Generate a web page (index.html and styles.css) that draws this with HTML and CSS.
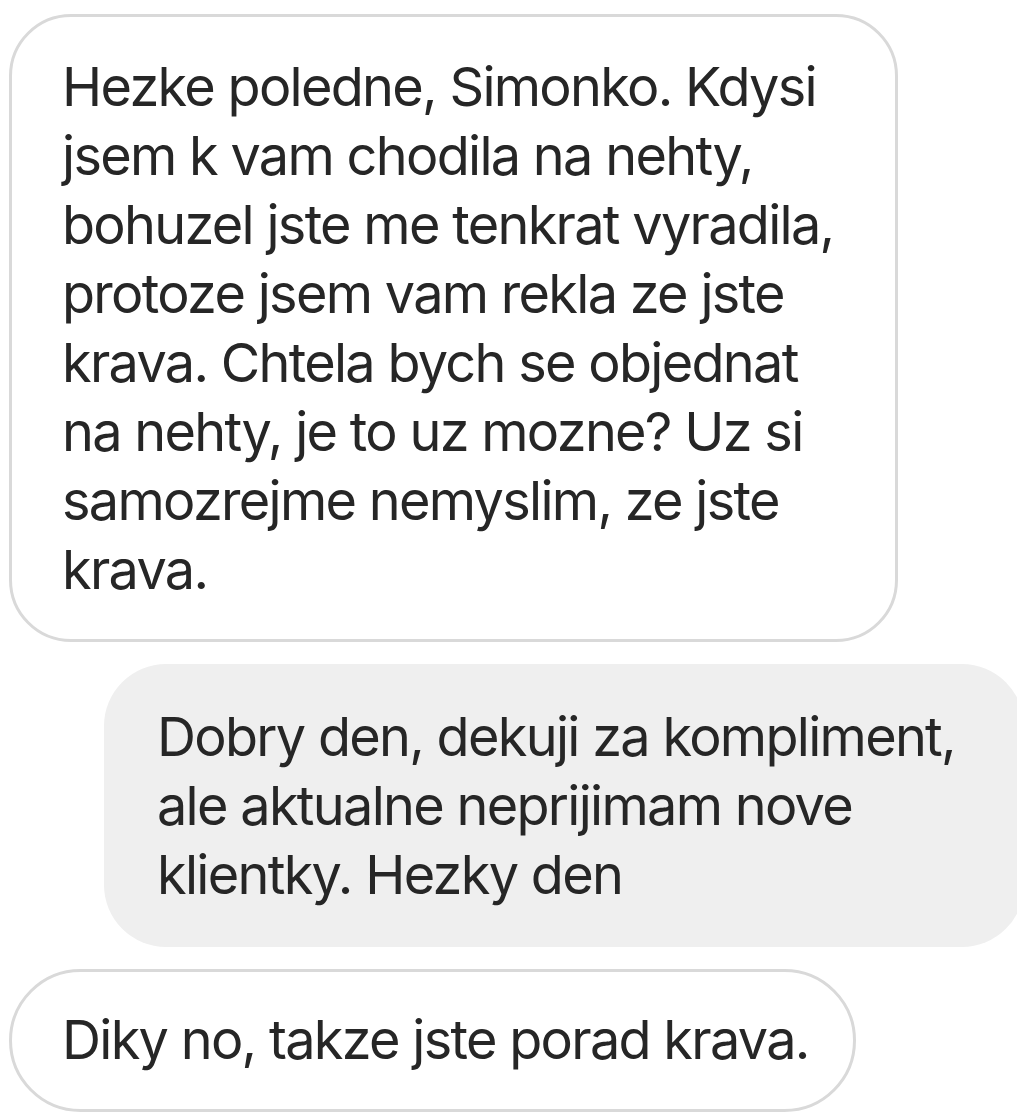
FILE: index.html
```html
<!DOCTYPE html>
<html lang="cs">
<head>
  <meta charset="UTF-8">
  <meta name="viewport" content="width=device-width, initial-scale=1.0">
  <title>Zpravy</title>
  <link rel="stylesheet" href="styles.css">
</head>
<body>
  <div class="chat">
    <div class="msg msg-in">
      Hezke poledne, Simonko. Kdysi<br>
      jsem k vam chodila na nehty,<br>
      bohuzel jste me tenkrat vyradila,<br>
      protoze jsem vam rekla ze jste<br>
      krava. Chtela bych se objednat<br>
      na nehty, je to uz mozne? Uz si<br>
      samozrejme nemyslim, ze jste<br>
      krava.
    </div>
    <div class="msg msg-out">
      Dobry den, dekuji za kompliment,<br>
      ale aktualne neprijimam nove<br>
      klientky. Hezky den
    </div>
    <div class="msg msg-in msg-pill">
      Diky no, takze jste porad krava.
    </div>
  </div>
</body>
</html>
```

FILE: styles.css
```css
html,
body {
  margin: 0;
  background: #fff;
  overflow: hidden;
}
.chat {
  display: flex;
  flex-direction: column;
  gap: 22px;
  padding: 14px 0 0 9px;
  font-family: Inter, "Noto Sans", sans-serif;
  font-size: 54px;
  line-height: 69px;
  letter-spacing: -1.7px;
  color: #262626;
  white-space: nowrap;
}
.msg {
  box-sizing: border-box;
  border-radius: 62px;
}
.msg-in {
  width: 889px;
  padding: 35px 50px 35px 50px;
  border: 3px solid #d9d9d9;
  background: #fff;
}
.msg-out {
  align-self: flex-start;
  width: 920px;
  margin-left: 95px;
  padding: 38px 40px 38px 53px;
  background: #efefef;
}
.msg-pill {
  width: 847px;
  height: 143px;
  padding-top: 33px;
  border-radius: 72px;
}
```
